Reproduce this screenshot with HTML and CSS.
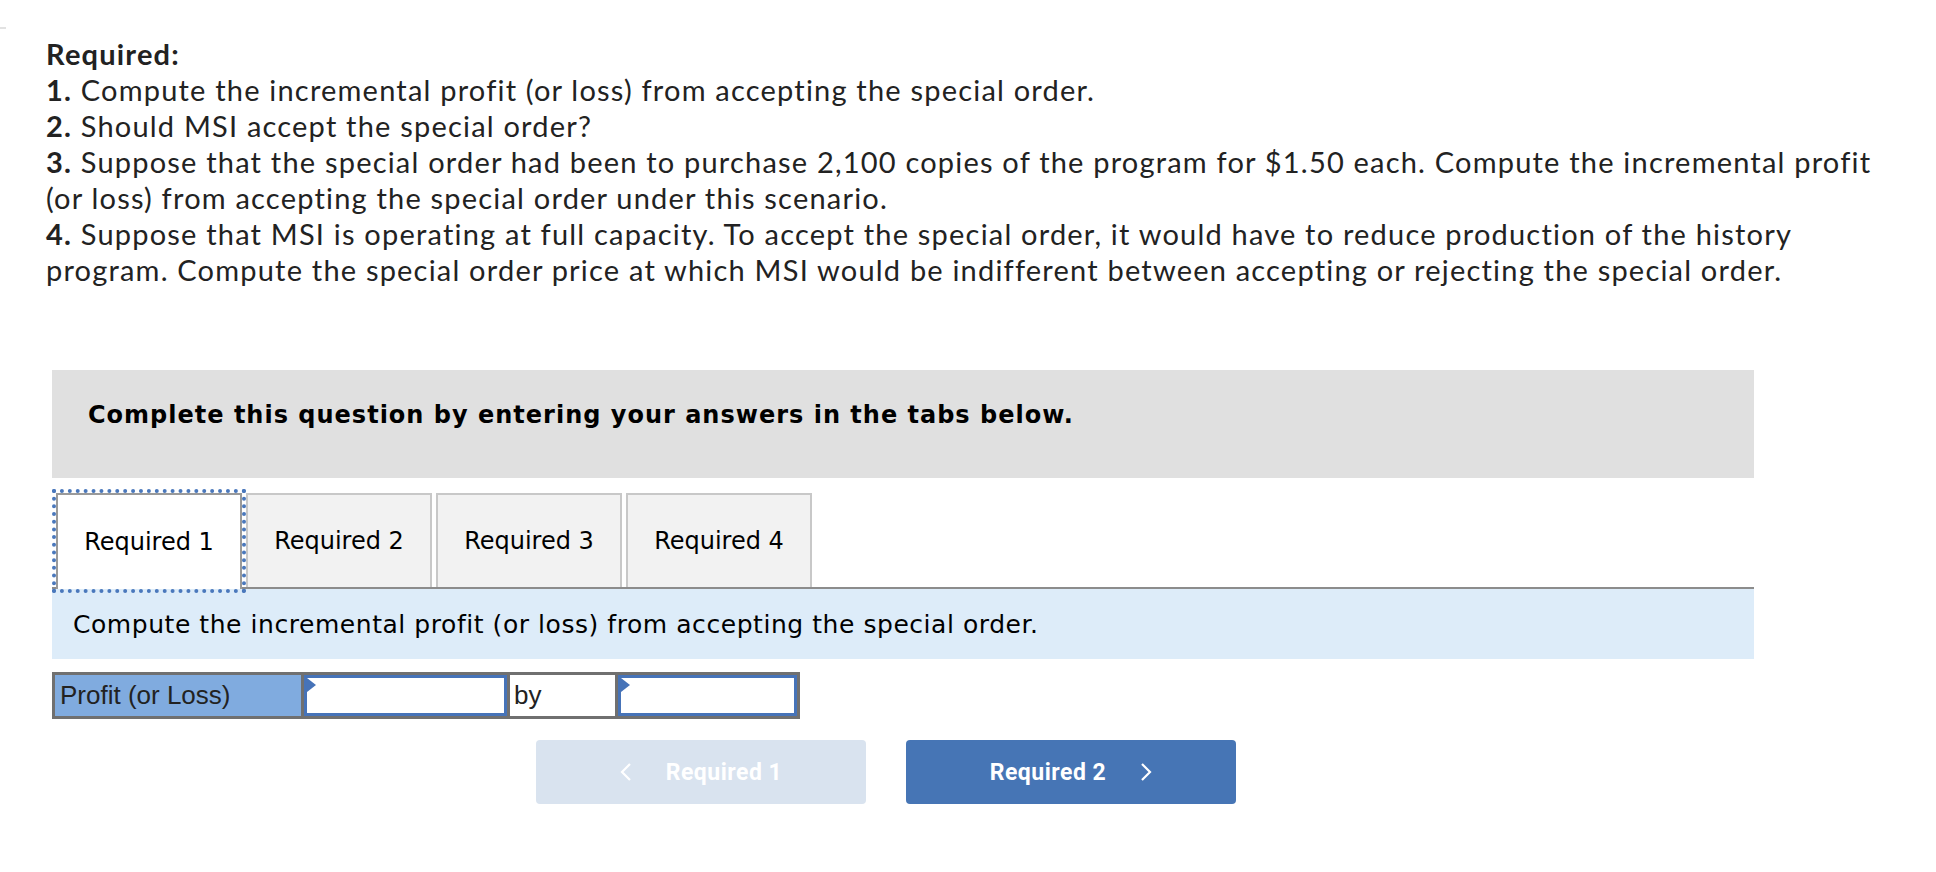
FILE: index.html
```html
<!DOCTYPE html>
<html>
<head>
<meta charset="utf-8">
<link rel="stylesheet" href="styles.css">
</head>
<body>
<div class="mark"></div>
<div class="question">
  <div class="line"><b>Required:</b></div>
  <div class="line"><b>1.</b> Compute the incremental profit (or loss) from accepting the special order.</div>
  <div class="line"><b>2.</b> Should MSI accept the special order?</div>
  <div class="line"><b>3.</b> Suppose that the special order had been to purchase 2,100 copies of the program for $1.50 each. Compute the incremental profit (or loss) from accepting the special order under this scenario.</div>
  <div class="line"><b>4.</b> Suppose that MSI is operating at full capacity. To accept the special order, it would have to reduce production of the history program. Compute the special order price at which MSI would be indifferent between accepting or rejecting the special order.</div>
</div>

<div class="work">
  <div class="banner">Complete this question by entering your answers in the tabs below.</div>

  <div class="tabs">
    <div class="tab active">Required 1</div>
    <div class="tab">Required 2</div>
    <div class="tab">Required 3</div>
    <div class="tab">Required 4</div>
  </div>

  <div class="instruction">Compute the incremental profit (or loss) from accepting the special order.</div>

  <div class="answer-row">
    <div class="cell label">Profit (or Loss)</div>
    <div class="cell input w1"><span class="flag"></span></div>
    <div class="cell by">by</div>
    <div class="cell input w2"><span class="flag"></span></div>
  </div>

  <div class="nav">
    <div class="btn prev">
      <svg class="chev" width="12" height="20" viewBox="0 0 12 20"><polyline points="10,2 2,10 10,18" fill="none" stroke="#ffffff" stroke-width="2.2"/></svg>
      <span>Required 1</span>
    </div>
    <div class="btn next">
      <span>Required 2</span>
      <svg class="chev" width="12" height="20" viewBox="0 0 12 20"><polyline points="2,2 10,10 2,18" fill="none" stroke="#ffffff" stroke-width="2.2"/></svg>
    </div>
  </div>
</div>
</body>
</html>
```

FILE: styles.css
```css
* { box-sizing: border-box; }
html, body { margin: 0; padding: 0; background: #ffffff; }
body { color: #222222; }

.mark {
  width: 6px;
  height: 2px;
  background: #e2e2e2;
  margin-top: 27px;
}

.question {
  margin-left: 46px;
  margin-top: 7px;
  width: 1850px;
  font-family: Lato, "Open Sans", sans-serif;
  font-size: 29px;
  letter-spacing: 1.2px;
  line-height: 36px;
  color: #222222;
}
.question b { font-weight: 700; }

.work {
  margin-left: 52px;
  width: 1702px;
  margin-top: 82px;
}

.banner {
  background: #e0e0e0;
  height: 108px;
  padding: 30px 36px 0 36px;
  font-family: "DejaVu Sans", Verdana, sans-serif;
  font-weight: 700;
  font-size: 24px;
  letter-spacing: 1px;
  line-height: 30px;
  color: #000000;
}

.tabs {
  display: flex;
  gap: 4px;
  margin-top: 15px;
  border-bottom: 2px solid #8c8c8c;
  height: 96px;
  padding-left: 4px;
}
.tab {
  width: 186px;
  height: 94px;
  background: #f2f2f2;
  border: 2px solid #c8c8c8;
  border-bottom: none;
  display: flex;
  align-items: center;
  justify-content: center;
  font-family: "DejaVu Sans", Verdana, sans-serif;
  font-size: 24px;
  color: #000000;
}
.tab.active {
  background: #ffffff;
  border-color: #9a9a9a;
  height: 96px;
  outline: 4px dotted #4a78bc;
  outline-offset: 0px;
  position: relative;
}

.instruction {
  background: #ddecf9;
  height: 70px;
  padding-left: 21px;
  display: flex;
  align-items: center;
  font-family: "DejaVu Sans", Verdana, sans-serif;
  font-size: 25px;
  letter-spacing: 0.55px;
  color: #000000;
}

.answer-row {
  display: flex;
  gap: 3px;
  background: #707070;
  padding: 3px;
  width: 748px;
  height: 47px;
  margin-top: 13px;
}
.cell {
  height: 41px;
  font-family: "Liberation Sans", Arial, sans-serif;
  font-size: 26px;
  color: #222222;
  display: flex;
  align-items: center;
}
.label {
  width: 246px;
  background: #80abdf;
  padding-left: 5px;
}
.input {
  background: #ffffff;
  border: 3px solid #4673b8;
  position: relative;
}
.w1 { width: 203px; }
.w2 { width: 179px; }
.by {
  width: 105px;
  background: #ffffff;
  padding-left: 4px;
}
.flag {
  position: absolute;
  left: 0;
  top: 0;
  width: 0;
  height: 0;
  border-top: 7px solid transparent;
  border-bottom: 7px solid transparent;
  border-left: 9px solid #4673b8;
}

.nav {
  display: flex;
  gap: 40px;
  margin-left: 484px;
  margin-top: 21px;
}
.btn {
  width: 330px;
  height: 64px;
  border-radius: 4px;
  display: flex;
  align-items: center;
  justify-content: center;
  gap: 34px;
  font-family: Roboto, "Liberation Sans", sans-serif;
  font-weight: 700;
  font-size: 23px;
  letter-spacing: 0.5px;
  color: #ffffff;
}
.btn.prev { background: #d9e3ef; }
.btn.next { background: #4675b5; }
.chev { display: block; }
```
